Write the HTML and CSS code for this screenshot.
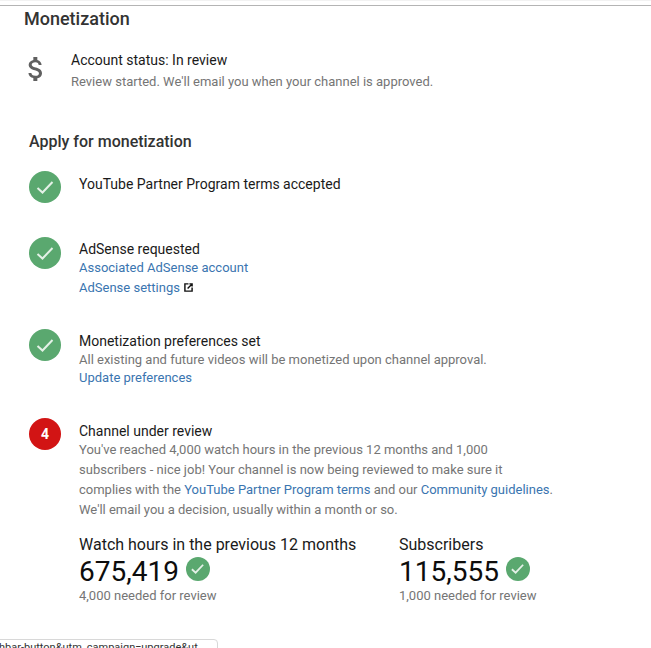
FILE: index.html
```html
<!DOCTYPE html>
<html lang="en">
<head>
  <meta charset="UTF-8">
  <title>Monetization</title>
  <link rel="stylesheet" href="styles.css">
</head>
<body>
  <div class="page">
    <h1 class="page-title">Monetization</h1>

    <!-- Account status -->
    <div class="status">
      <svg class="dollar" width="32" height="32" viewBox="0 0 24 24">
        <path d="M11.800 10.900c-2.270-.590-3-1.200-3-2.150 0-1.090 1.010-1.850 2.700-1.850 1.780 0 2.440.850 2.500 2.100h2.210c-.070-1.720-1.120-3.300-3.210-3.810V3h-3v2.160c-1.940.420-3.500 1.680-3.500 3.610 0 2.310 1.910 3.460 4.700 4.130 2.500.600 3 1.480 3 2.410 0 .690-.490 1.790-2.700 1.790-2.060 0-2.870-.920-2.980-2.100h-2.200c.120 2.190 1.760 3.420 3.680 3.830V21h3v-2.150c1.950-.370 3.500-1.500 3.500-3.550 0-2.840-2.430-3.810-4.700-4.400z" fill="#606060"/>
      </svg>
      <div class="status-body">
        <div class="line-title">Account status: In review</div>
        <div class="status-text">Review started. We'll email you when your channel is approved.</div>
      </div>
    </div>

    <h2 class="section-title">Apply for monetization</h2>

    <div class="step step-terms">
      <span class="badge"><svg width="20" height="20" viewBox="0 0 20 20"><path d="M2.500 11l5 4.500L17.500 5" fill="none" stroke="#e4f1e7" stroke-width="2"/></svg></span>
      <div class="step-body step-single">YouTube Partner Program terms accepted</div>
    </div>

    <div class="step step-adsense">
      <span class="badge"><svg width="20" height="20" viewBox="0 0 20 20"><path d="M2.500 11l5 4.500L17.500 5" fill="none" stroke="#e4f1e7" stroke-width="2"/></svg></span>
      <div class="step-body">
        <div class="line-title">AdSense requested</div>
        <a class="link link-row" href="#">Associated AdSense account</a>
        <a class="link link-row" href="#">AdSense settings
          <svg class="open-icon" width="9" height="9" viewBox="0 0 10 10"><path d="M5 1H1v8h8V5M6 1h3v3M9 1L4 6" fill="none" stroke="#111" stroke-width="1.600"/></svg>
        </a>
      </div>
    </div>

    <div class="step step-prefs">
      <span class="badge"><svg width="20" height="20" viewBox="0 0 20 20"><path d="M2.500 11l5 4.500L17.500 5" fill="none" stroke="#e4f1e7" stroke-width="2"/></svg></span>
      <div class="step-body">
        <div class="line-title">Monetization preferences set</div>
        <div class="muted">All existing and future videos will be monetized upon channel approval.</div>
        <a class="link" href="#">Update preferences</a>
      </div>
    </div>

    <div class="step step-review">
      <span class="badge badge-red">4</span>
      <div class="step-body">
        <div class="line-title">Channel under review</div>
        <p class="review-text">You've reached 4,000 watch hours in the previous 12 months and 1,000<br>subscribers - nice job! Your channel is now being reviewed to make sure it<br>complies with the <a class="link" href="#">YouTube Partner Program terms</a> and our <a class="link" href="#">Community guidelines</a>.<br>We'll email you a decision, usually within a month or so.</p>

        <div class="stats">
          <div class="stat stat-hours">
            <div class="stat-label">Watch hours in the previous 12 months</div>
            <div class="stat-value">675,419
              <span class="badge badge-small"><svg width="15" height="15" viewBox="0 0 20 20"><path d="M2.500 11l5 4.500L17.500 5" fill="none" stroke="#e4f1e7" stroke-width="2.400"/></svg></span>
            </div>
            <div class="muted">4,000 needed for review</div>
          </div>
          <div class="stat">
            <div class="stat-label">Subscribers</div>
            <div class="stat-value">115,555
              <span class="badge badge-small"><svg width="15" height="15" viewBox="0 0 20 20"><path d="M2.500 11l5 4.500L17.500 5" fill="none" stroke="#e4f1e7" stroke-width="2.400"/></svg></span>
            </div>
            <div class="muted">1,000 needed for review</div>
          </div>
        </div>
      </div>
    </div>
  </div>

  <!-- browser status bubble -->
  <div class="url-bubble">hbar-button&amp;utm_campaign=upgrade&amp;ut</div>
</body>
</html>
```

FILE: styles.css
```css
* {
  box-sizing: border-box;
}

html, body {
  height: 100%;
}

body {
  margin: 0;
  overflow: hidden;
  position: relative;
  border-top: 1px solid #f2f2f2;
  background: #fff;
  font-family: Roboto, Arial, sans-serif;
  font-size: 13px;
  color: #111;
}

.page {
  border-top: 1px solid #b4b4b4;
  margin-top: 4px;
  padding-left: 24px;
}

.page-title {
  margin: 1px 0 0;
  font-size: 18px;
  line-height: 24px;
  font-weight: 500;
  color: #333;
}

.status {
  display: flex;
  margin-top: 20px;
}

.dollar {
  flex-shrink: 0;
  margin: 2px 0 0 -4px;
}

.status-body {
  margin-left: 19px;
}

.line-title {
  font-size: 14px;
  line-height: 18px;
  color: #1a1a1a;
}

.status-text {
  line-height: 20px;
  margin-top: 3px;
  color: #757575;
}

.section-title {
  margin: 38px 0 0 5px;
  font-size: 16px;
  line-height: 24px;
  font-weight: 500;
  color: #333;
}

.step {
  display: flex;
  margin-left: 5px;
}

.step-terms {
  margin-top: 17px;
  height: 66px;
}

.step-adsense {
  height: 92px;
}

.step-prefs {
  height: 89px;
}

.badge {
  display: flex;
  align-items: center;
  justify-content: center;
  flex-shrink: 0;
  width: 32px;
  height: 32px;
  border-radius: 50%;
  background: #5aa86f;
}

.badge-red {
  background: #d21414;
  color: #fff;
  font-size: 14px;
  font-weight: 700;
}

.badge-small {
  display: inline-flex;
  width: 24px;
  height: 24px;
  vertical-align: 5px;
}

.step-body {
  margin-left: 18px;
  padding-top: 3px;
  flex: 1;
}

.step-review .step-body {
  padding-top: 4px;
}

.step-single {
  font-size: 14px;
  line-height: 18px;
  color: #1a1a1a;
  padding-top: 4px;
}

.link {
  color: #3a75b0;
  text-decoration: none;
}

.link-row {
  display: block;
  line-height: 20px;
}

.muted {
  color: #757575;
  line-height: 18px;
}

.step-prefs .muted {
  margin-top: 1px;
}

.step-prefs .link {
  display: block;
  line-height: 18px;
}

.open-icon {
  margin-left: 1px;
  vertical-align: 0;
}

.review-text {
  margin: 0;
  line-height: 20px;
  color: #757575;
}

.stats {
  display: flex;
  margin-top: 15px;
}

.stat-hours {
  width: 320px;
}

.stat-label {
  font-size: 16px;
  line-height: 20px;
  color: #1a1a1a;
}

.stat-value {
  font-size: 28px;
  line-height: 34px;
  color: #0d0d0d;
}

.stat .muted {
  line-height: 16px;
  margin-top: -1px;
}

.url-bubble {
  position: absolute;
  left: -1px;
  bottom: -8px;
  width: 219px;
  height: 17px;
  padding: 1px 0 0 1px;
  overflow: hidden;
  border: 1px solid #d8d8d8;
  border-radius: 0 4px 0 0;
  background: #fff;
  font-size: 11px;
  line-height: 14px;
  text-indent: -2px;
  color: #333;
  white-space: nowrap;
}
```
